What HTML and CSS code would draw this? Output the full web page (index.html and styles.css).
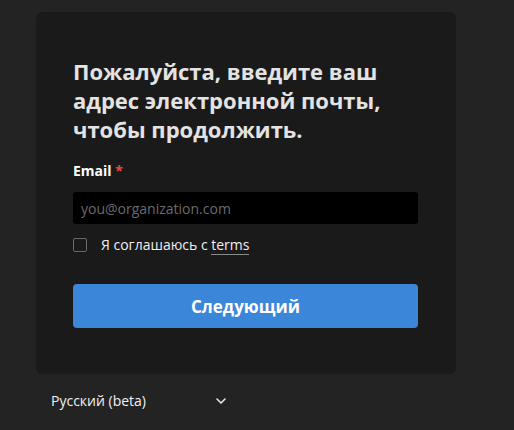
FILE: index.html
```html
<!DOCTYPE html>
<html lang="ru">
<head>
    <meta charset="UTF-8">
    <meta name="viewport" content="width=device-width, initial-scale=1.0">
    <title>Вход</title>
    <link rel="stylesheet" href="styles.css">
</head>
<body>

    <div class="page">
        <div class="card">
            <h1 class="title">Пожалуйста, введите ваш адрес электронной почты, чтобы продолжить.</h1>

            <label class="field-label" for="email">Email <span class="required">*</span></label>
            <input class="email-input" type="email" id="email" placeholder="you@organization.com">

            <label class="agree">
                <input type="checkbox" class="agree-box">
                <span>Я соглашаюсь с <a href="#" class="terms">terms</a></span>
            </label>

            <button class="next-btn">Следующий</button>
        </div>

        <div class="lang">
            <span>Русский (beta)</span>
            <svg class="chevron" width="10" height="6" viewBox="0 0 10 6">
                <path d="M1 1l4 4 4-4" fill="none" stroke="#e6e6e6" stroke-width="1.6" stroke-linecap="round" stroke-linejoin="round"/>
            </svg>
        </div>
    </div>

</body>
</html>
```

FILE: styles.css
```css
body {
    margin: 0;
    background-color: #232323;
    font-family: "Open Sans", "Noto Sans", sans-serif;
    color: #e6e6e6;
}
.page {
    padding: 12px 0 0 36px;
}
.card {
    width: 420px;
    box-sizing: border-box;
    background: #1a1a1a;
    border-radius: 6px;
    padding: 45px 38px 46px 37px;
    display: flex;
    flex-direction: column;
}
.title {
    margin: 0;
    font-size: 22px;
    line-height: 29px;
    font-weight: 700;
    color: #e3e3e3;
}
.field-label {
    margin-top: 17px;
    font-size: 14px;
    font-weight: 700;
    color: #fff;
}
.required {
    color: #e5484d;
}
.email-input {
    margin-top: 12px;
    height: 32px;
    box-sizing: border-box;
    background: #000;
    border: none;
    border-radius: 3px;
    padding: 0 8px;
    font-family: inherit;
    font-size: 14px;
    color: #fff;
}
.email-input::placeholder {
    color: #6b6b6b;
}
.agree {
    margin-top: 11px;
    display: flex;
    align-items: center;
    gap: 14px;
    font-size: 14px;
    color: #f0f0f0;
}
.agree-box {
    appearance: none;
    margin: 0;
    width: 14px;
    height: 14px;
    border: 1px solid #6a6a6a;
    border-radius: 2px;
    background: #1a1a1a;
}
.terms {
    color: #f0f0f0;
    text-decoration: none;
    border-bottom: 1px solid #8a8a8a;
}
.next-btn {
    margin-top: 30px;
    height: 44px;
    background-color: #3b86d8;
    color: #fff;
    border: none;
    border-radius: 4px;
    font-family: inherit;
    font-size: 17px;
    font-weight: 700;
    cursor: pointer;
}
.lang {
    width: 175px;
    margin-top: 17px;
    padding-left: 15px;
    display: flex;
    align-items: center;
    justify-content: space-between;
    font-size: 14px;
    color: #f0f0f0;
}
```
